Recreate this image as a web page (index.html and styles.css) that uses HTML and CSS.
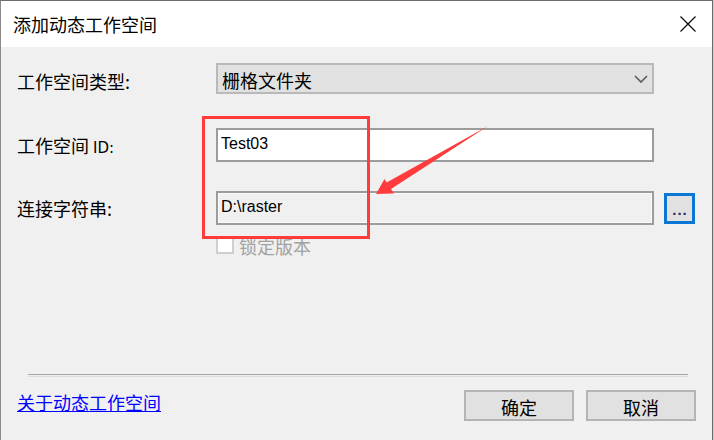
FILE: index.html
```html
<!DOCTYPE html>
<html lang="zh-CN">
<head>
<meta charset="utf-8">
<title>添加动态工作空间</title>
<link rel="stylesheet" href="styles.css">
</head>
<body>
<div class="window">
  <div class="titlebar">
    <span class="title">添加动态工作空间</span>
    <svg class="close" width="16" height="16" viewBox="0 0 16 16"><path d="M0.5 0.5 L15.5 15.5 M15.5 0.5 L0.5 15.5" stroke="#000" stroke-width="1.1" fill="none"/></svg>
  </div>
  <div class="content">
    <div class="row row-type">
      <span class="lbl">工作空间类型:</span>
      <div class="combo"><span class="combo-text">栅格文件夹</span>
        <svg class="chev" width="14" height="8" viewBox="0 0 14 8"><polyline points="1,1 7,7 13,1" fill="none" stroke="#5a5a5a" stroke-width="1.6"/></svg>
      </div>
    </div>
    <div class="row row-id">
      <span class="lbl">工作空间 <span class="latin">ID:</span></span>
      <div class="textbox"><span class="latin">Test03</span></div>
    </div>
    <div class="row row-conn">
      <span class="lbl">连接字符串:</span>
      <div class="textbox readonly"><span class="latin">D:\raster</span></div>
      <button class="browse">...</button>
    </div>
    <div class="row row-check">
      <span class="checkbox"></span>
      <span class="check-label">锁定版本</span>
    </div>
  </div>
  <div class="footer">
    <div class="sep"></div>
    <div class="footer-row">
      <a class="link" href="#">关于动态工作空间</a>
      <div class="buttons">
        <button class="btn">确定</button>
        <button class="btn">取消</button>
      </div>
    </div>
  </div>
  <div class="annot-rect"></div>
  <svg class="annot-arrow" width="714" height="440" viewBox="0 0 714 440">
    <polygon points="376,194 394,193.5 391,189 488,126 386.6,182.5 384.5,179" fill="#ff3b3b"/>
  </svg>
</div>
</body>
</html>
```
FILE: styles.css
```css
html, body {
  margin: 0;
  padding: 0;
}
body {
  background: #c8c8c8;
  width: 714px;
  height: 440px;
  overflow: hidden;
  font-family: "Noto Sans CJK SC", "Noto Sans", sans-serif;
  font-size: 18px;
  color: #000;
}
.window {
  position: relative;
  width: 711px;
  height: 439px;
  background: #f0f0f0;
  border-top: 1px solid #6e6e6e;
  border-left: 1px solid #8c8c8c;
  border-right: 1px solid #6e6e6e;
  display: flex;
  flex-direction: column;
}
.titlebar {
  height: 46px;
  background: #fff;
  display: flex;
  align-items: center;
  justify-content: space-between;
  padding: 0 16px 0 12px;
}
.title {
  font-size: 18px;
  line-height: 24px;
  margin-top: -1px;
}
.close {
  display: block;
}
.content {
  display: flex;
  flex-direction: column;
  padding-left: 16px;
}
.row {
  display: flex;
  align-items: center;
}
.lbl {
  width: 199px;
  flex: none;
  line-height: 24px;
}
.latin {
  font-family: "Liberation Sans", "DejaVu Sans", sans-serif;
  font-size: 16px;
}
.lbl .latin {
  font-family: "DejaVu Sans", sans-serif;
  font-size: 15px;
}
.row-type { margin-top: 16px; }
.row-type .lbl { margin-top: 5px; }
.row-id { margin-top: 34px; }
.row-id .lbl { margin-top: 3px; }
.row-conn { margin-top: 29px; }
.row-check {
  margin-top: 11px;
  padding-left: 199px;
  height: 18px;
}

.combo {
  box-sizing: border-box;
  width: 438px;
  height: 31px;
  border: 2px solid #b9b9b9;
  background: #e1e1e1;
  display: flex;
  align-items: center;
  justify-content: space-between;
  padding: 2px 4px 0 4px;
}
.combo-text {
  line-height: 24px;
}
.chev { display: block; margin-top: -1px; }
.textbox {
  box-sizing: border-box;
  width: 438px;
  height: 34px;
  border: 2px solid #9c9c9c;
  background: #fff;
  display: flex;
  align-items: center;
  padding: 0 3px 3px 3px;
  color: #000;
}
.textbox.readonly {
  background: #f0f0f0;
  box-shadow: inset 0 0 0 1px #fbfbfb;
}
.browse {
  box-sizing: border-box;
  width: 31px;
  height: 31px;
  margin-left: 10px;
  border: 3px solid #0a77d5;
  background: #e1e1e1;
  padding: 0;
  font-family: "Liberation Sans", sans-serif;
  font-size: 15px;
  font-weight: bold;
  letter-spacing: 1px;
  color: #2a2a6a;
  line-height: 20px;
  padding-top: 4px;
  padding-left: 1px;
}
.checkbox {
  box-sizing: border-box;
  width: 18px;
  height: 18px;
  border: 2px solid #cfcfcf;
  background: #fff;
}
.check-label {
  margin-left: 5px;
  color: #a2a2a2;
  line-height: 18px;
  margin-top: 2px;
}
.footer {
  display: flex;
  flex-direction: column;
}
.sep {
  margin: 120px 0 0 27px;
  width: 660px;
  height: 1px;
  border-top: 1px solid #a5a5a5;
  border-bottom: 1px solid #dcdcdc;
}
.footer-row {
  display: flex;
  justify-content: space-between;
  align-items: flex-start;
  margin-top: 13px;
  padding: 0 16px;
}
.link {
  color: #0000ff;
  text-decoration: underline;
  line-height: 24px;
}
.buttons {
  display: flex;
  gap: 12px;
}
.btn {
  box-sizing: border-box;
  width: 110px;
  height: 31px;
  border: 2px solid #b4b4b4;
  background: #e1e1e1;
  font-family: "Noto Sans CJK SC", sans-serif;
  font-size: 18px;
  line-height: 24px;
  padding: 2px 0 0 0;
  color: #000;
}
.annot-rect {
  position: absolute;
  left: 201px;
  top: 115px;
  width: 162px;
  height: 117px;
  border: 3px solid #ff3b3b;
}
.annot-arrow {
  position: absolute;
  left: -1px;
  top: -1px;
  pointer-events: none;
}
```
